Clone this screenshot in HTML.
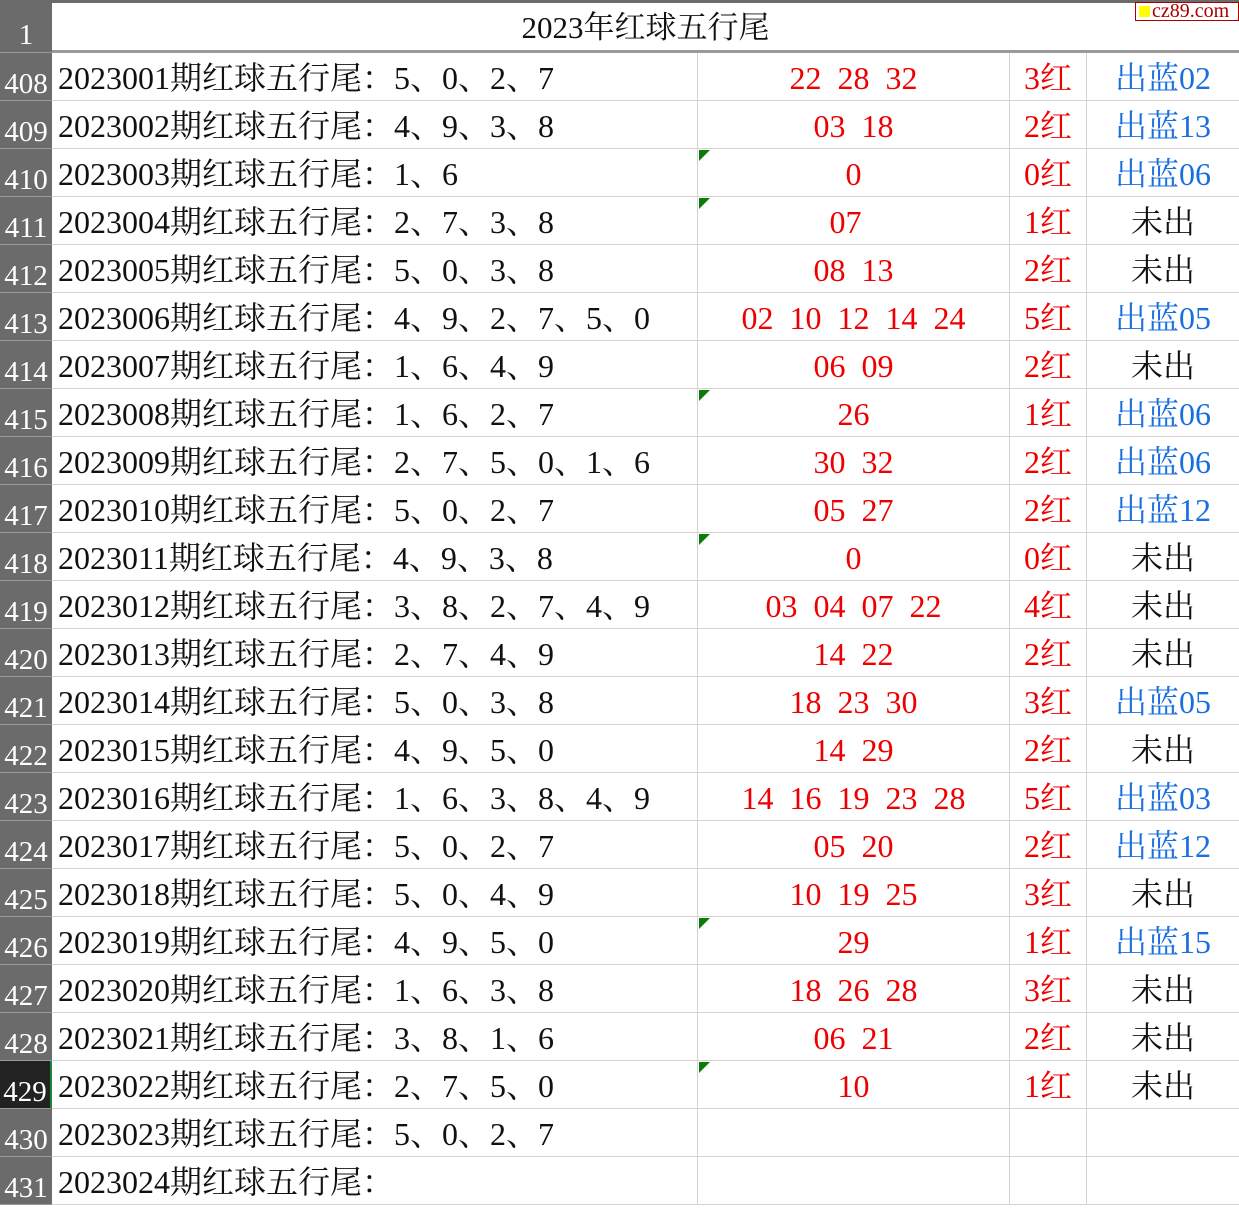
<!DOCTYPE html>
<html><head><meta charset="utf-8"><style>
*{margin:0;padding:0;box-sizing:border-box}
body{width:1239px;height:1208px;background:#fff;position:relative;overflow:hidden;font-family:"Liberation Serif","Noto Serif CJK SC",serif}
.top{position:absolute;left:0;top:0;width:1239px;height:3px;background:#6b6b6b}
.rh{position:absolute;left:0;width:52px;background:#6b6b6b;color:#fff;font-size:29px;text-align:center;border-bottom:1px solid #9a9a9a}
.row{position:absolute;left:52px;width:1187px;height:48px;border-bottom:1px solid #d4d4d4}
.c{position:absolute;top:0;height:48px;line-height:51px;font-size:32px;white-space:pre;border-right:1px solid #d4d4d4}
.a{left:0;width:646px;padding-left:6px;color:#111}
.b{left:646px;width:312px;text-align:center;color:#e00}
.cc{left:958px;width:77px;text-align:center;color:#e00}
.d{left:1035px;width:152px;text-align:center;border-right:none}
.blue{color:#1a6fe0}.blk{color:#111}
.tri{position:absolute;left:647px;top:1px;width:0;height:0;border-top:11px solid #0a7a0a;border-right:11px solid transparent}
</style></head><body>
<div class="top"></div>
<div class="rh" style="top:3px;height:50px;line-height:64px">1</div>
<div style="position:absolute;left:52px;top:3px;width:1187px;height:48px;text-align:center;font-size:31px;line-height:50px;color:#111">2023年红球五行尾</div>
<div style="position:absolute;left:52px;top:50px;width:1187px;height:3px;background:#9a9a9a"></div>
<div style="position:absolute;left:1135px;top:2px;width:104px;height:19px;border:1px solid #a00;background:#fff;font-size:20px;line-height:16px;color:#a00;padding-left:3px;white-space:nowrap"><span style="display:inline-block;width:11px;height:11px;background:#ff0;margin-right:2px"></span>cz89.com</div>
<div id="rows"></div>
<script>
var d=[
["2023001期红球五行尾：5、0、2、7","22  28  32","3红","出蓝02",0],
["2023002期红球五行尾：4、9、3、8","03  18","2红","出蓝13",0],
["2023003期红球五行尾：1、6","0","0红","出蓝06",1],
["2023004期红球五行尾：2、7、3、8","07  ","1红","未出",1],
["2023005期红球五行尾：5、0、3、8","08  13","2红","未出",0],
["2023006期红球五行尾：4、9、2、7、5、0","02  10  12  14  24","5红","出蓝05",0],
["2023007期红球五行尾：1、6、4、9","06  09","2红","未出",0],
["2023008期红球五行尾：1、6、2、7","26","1红","出蓝06",1],
["2023009期红球五行尾：2、7、5、0、1、6","30  32","2红","出蓝06",0],
["2023010期红球五行尾：5、0、2、7","05  27","2红","出蓝12",0],
["2023011期红球五行尾：4、9、3、8","0","0红","未出",1],
["2023012期红球五行尾：3、8、2、7、4、9","03  04  07  22","4红","未出",0],
["2023013期红球五行尾：2、7、4、9","14  22","2红","未出",0],
["2023014期红球五行尾：5、0、3、8","18  23  30","3红","出蓝05",0],
["2023015期红球五行尾：4、9、5、0","14  29","2红","未出",0],
["2023016期红球五行尾：1、6、3、8、4、9","14  16  19  23  28","5红","出蓝03",0],
["2023017期红球五行尾：5、0、2、7","05  20","2红","出蓝12",0],
["2023018期红球五行尾：5、0、4、9","10  19  25","3红","未出",0],
["2023019期红球五行尾：4、9、5、0","29","1红","出蓝15",1],
["2023020期红球五行尾：1、6、3、8","18  26  28","3红","未出",0],
["2023021期红球五行尾：3、8、1、6","06  21","2红","未出",0],
["2023022期红球五行尾：2、7、5、0","10","1红","未出",1],
["2023023期红球五行尾：5、0、2、7","","","",0],
["2023024期红球五行尾：","","","",0]];
var h="";
for(var i=0;i<d.length;i++){var t=53+i*48,r=d[i],n=408+i;
h+='<div class="rh" style="top:'+t+'px;height:48px;line-height:62px;'+(n==429?'background:#222;border-right:2px solid #1a8a3a;':'')+'">'+n+'</div>';
h+='<div class="row" style="top:'+t+'px"><div class="c a">'+r[0]+'</div><div class="c b">'+r[1]+'</div><div class="c cc">'+r[2]+'</div><div class="c d '+(r[3].indexOf("蓝")>=0?'blue':'blk')+'">'+r[3]+'</div>'+(r[4]?'<div class="tri"></div>':'')+'</div>';}
document.getElementById("rows").innerHTML=h;
</script>
</body></html>
